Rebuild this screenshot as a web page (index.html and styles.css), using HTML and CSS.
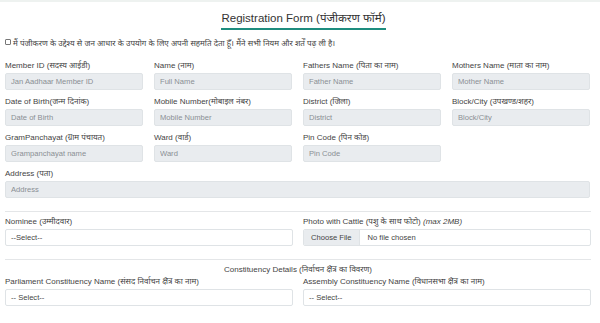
FILE: index.html
```html
<!DOCTYPE html>
<html lang="hi">
  <head>
    <meta charset="UTF-8" />
    <meta name="viewport" content="width=device-width, initial-scale=1.0" />
    <title>Registration Form</title>
    <link rel="stylesheet" href="styles.css">
  </head>
  <body>
    <div class="topbar"></div>
    <form class="reg-form">
      <div class="heading">
        <h2>Registration Form (पंजीकरण फॉर्म)</h2>
      </div>
      <label class="consent">
        <span class="box"></span>
        <span>मैं पंजीकरण के उद्देश्य से जन आधार के उपयोग के लिए अपनी सहमति देता हूँ। मैंने सभी नियम और शर्तें पढ़ ली है।</span>
      </label>

      <div class="grid">
        <div class="field">
          <label>Member ID (सदस्य आईडी)</label>
          <input type="text" placeholder="Jan Aadhaar Member ID" disabled />
        </div>
        <div class="field">
          <label>Name (नाम)</label>
          <input type="text" placeholder="Full Name" disabled />
        </div>
        <div class="field">
          <label>Fathers Name (पिता का नाम)</label>
          <input type="text" placeholder="Father Name" disabled />
        </div>
        <div class="field">
          <label>Mothers Name (माता का नाम)</label>
          <input type="text" placeholder="Mother Name" disabled />
        </div>

        <div class="field">
          <label>Date of Birth(जन्म दिनांक)</label>
          <input type="text" placeholder="Date of Birth" disabled />
        </div>
        <div class="field">
          <label>Mobile Number(मोबाइल नंबर)</label>
          <input type="text" placeholder="Mobile Number" disabled />
        </div>
        <div class="field">
          <label>District (जिला)</label>
          <input type="text" placeholder="District" disabled />
        </div>
        <div class="field">
          <label>Block/City (उपखण्ड/शहर)</label>
          <input type="text" placeholder="Block/City" disabled />
        </div>

        <div class="field">
          <label>GramPanchayat (ग्राम पंचायत)</label>
          <input type="text" placeholder="Grampanchayat name" disabled />
        </div>
        <div class="field">
          <label>Ward (वार्ड)</label>
          <input type="text" placeholder="Ward" disabled />
        </div>
        <div class="field">
          <label>Pin Code (पिन कोड)</label>
          <input type="text" placeholder="Pin Code" disabled />
        </div>
        <div></div>

        <div class="field full">
          <label>Address (पता)</label>
          <input type="text" placeholder="Address" disabled />
        </div>
      </div>

      <hr />

      <div class="grid two">
        <div class="field">
          <label>Nominee (उम्मीदवार)</label>
          <div class="select">--Select--</div>
        </div>
        <div class="field">
          <label>Photo with Cattle (पशु के साथ फोटो) <i>(max 2MB)</i></label>
          <div class="file">
            <span class="file-btn">Choose File</span>
            <span>No file chosen</span>
          </div>
        </div>
      </div>

      <hr />

      <p class="section-title">Constituency Details (निर्वाचन क्षेत्र का विवरण)</p>

      <div class="grid two">
        <div class="field">
          <label>Parliament Constituency Name (संसद निर्वाचन क्षेत्र का नाम)</label>
          <div class="select">-- Select--</div>
        </div>
        <div class="field">
          <label>Assembly Constituency Name (विधानसभा क्षेत्र का नाम)</label>
          <div class="select">-- Select--</div>
        </div>
      </div>
    </form>
  </body>
</html>
```

FILE: styles.css
```css
body {
  margin: 0;
  font-family: "Liberation Sans", Arial, "Noto Sans", sans-serif;
  font-size: 8px;
  color: #333;
  background: #fff;
}
.topbar {
  height: 2px;
  background: #eef2f0;
}
.reg-form {
  width: 586px;
  margin-left: 5px;
}
.heading {
  text-align: center;
  padding-top: 9px;
  padding-left: 11px;
}
.heading h2 {
  display: inline-block;
  margin: 0;
  font-size: 11.5px;
  font-weight: normal;
  line-height: 14px;
  color: #333;
  padding-bottom: 3px;
  border-bottom: 2px solid #1e8c7e;
}
.consent {
  display: flex;
  align-items: center;
  gap: 2px;
  margin-top: 7px;
  height: 10px;
  font-size: 8px;
  color: #444;
}
.consent .box {
  width: 4px;
  height: 4px;
  border: 1px solid #777;
  border-radius: 1px;
}
.grid {
  display: grid;
  grid-template-columns: repeat(4, 138px);
  column-gap: 11px;
  row-gap: 7px;
  margin-top: 14px;
}
.grid.two {
  grid-template-columns: 288px 288px;
  column-gap: 10px;
  margin-top: 0;
}
.field label {
  display: block;
  line-height: 10px;
  margin-bottom: 2px;
  color: #444;
  white-space: nowrap;
}
.field.full {
  grid-column: 1 / -1;
}
.field input {
  display: block;
  width: 100%;
  height: 17px;
  box-sizing: border-box;
  padding: 0 5px;
  border: 1px solid #dfe3e6;
  border-radius: 2px;
  background: #e9ecef;
  font-family: inherit;
  font-size: 7.6px;
}
.field input::placeholder {
  color: #8a8f94;
}
hr {
  border: 0;
  border-top: 1px solid #e4e6e8;
  margin: 13px 0 5px;
}
.select {
  height: 17px;
  box-sizing: border-box;
  border: 1px solid #dfe3e6;
  border-radius: 2px;
  padding: 0 5px;
  line-height: 15px;
  font-size: 7.6px;
  color: #444;
}
.file {
  display: flex;
  align-items: center;
  height: 17px;
  box-sizing: border-box;
  border: 1px solid #dfe3e6;
  border-radius: 2px;
  font-size: 7.6px;
  color: #444;
  overflow: hidden;
}
.file-btn {
  background: #e9ecef;
  height: 100%;
  line-height: 15px;
  padding: 0 7px;
  margin-right: 8px;
  border-right: 1px solid #dfe3e6;
}
.section-title {
  text-align: center;
  margin: 0 0 2px;
  line-height: 10px;
  color: #444;
}
```
